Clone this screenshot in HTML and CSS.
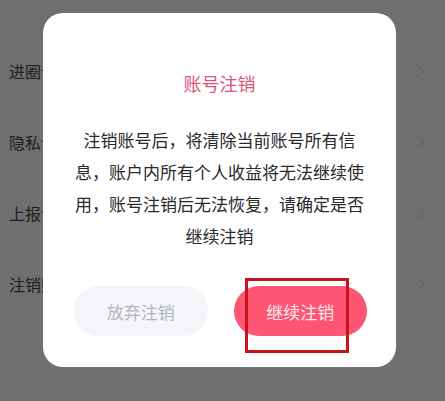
FILE: index.html
```html
<!DOCTYPE html>
<html lang="zh-CN">
<head>
<meta charset="utf-8">
<title>账号注销</title>
<link rel="stylesheet" href="styles.css">
</head>
<body>
<div class="page">
  <ul class="list">
    <li class="row"><span class="label">进圈设置</span><svg class="chev" viewBox="0 0 10 16"><path d="M2 1.5 L8.5 8 L2 14.5"/></svg></li>
    <li class="row"><span class="label">隐私设置</span><svg class="chev" viewBox="0 0 10 16"><path d="M2 1.5 L8.5 8 L2 14.5"/></svg></li>
    <li class="row"><span class="label">上报设置</span><svg class="chev" viewBox="0 0 10 16"><path d="M2 1.5 L8.5 8 L2 14.5"/></svg></li>
    <li class="row"><span class="label">注销账号</span><svg class="chev" viewBox="0 0 10 16"><path d="M2 1.5 L8.5 8 L2 14.5"/></svg></li>
  </ul>
</div>
<div class="mask"></div>
<div class="dialog">
  <div class="title">账号注销</div>
  <p class="msg">注销账号后，将清除当前账号所有信息，账户内所有个人收益将无法继续使用，账号注销后无法恢复，请确定是否继续注销</p>
  <div class="actions">
    <button class="btn cancel">放弃注销</button>
    <button class="btn confirm">继续注销</button>
  </div>
</div>
<div class="mark"></div>
</body>
</html>
```
FILE: styles.css
```css
html, body {
  margin: 0;
  padding: 0;
  width: 445px;
  height: 401px;
  overflow: hidden;
  font-family: "Noto Sans CJK SC", "Noto Sans", sans-serif;
}
.page {
  background: #ffffff;
  height: 401px;
}
.list {
  list-style: none;
  margin: 0;
  padding: 35px 0 0 0;
}
.row {
  height: 71px;
  display: flex;
  align-items: center;
  justify-content: space-between;
  padding: 0 20px 0 9px;
}
.label {
  font-size: 16px;
  color: #4a4a4a;
}
.chev {
  width: 10px;
  height: 16px;
  fill: none;
  stroke: #ececec;
  stroke-width: 1.6;
}
.mask {
  position: fixed;
  inset: 0;
  background: rgba(0, 0, 0, 0.565);
}
.dialog {
  position: fixed;
  left: 43px;
  top: 13px;
  width: 353px;
  height: 354px;
  box-sizing: border-box;
  background: #ffffff;
  border-radius: 20px;
  padding-top: 58px;
  display: flex;
  flex-direction: column;
  align-items: center;
}
.title {
  font-size: 18px;
  line-height: 24px;
  color: #d9577a;
}
.msg {
  margin: 29px 0 0 0;
  padding: 0 29px;
  box-sizing: border-box;
  width: 100%;
  font-size: 17px;
  line-height: 32px;
  color: #2a2a2a;
  text-align: center;
}
.actions {
  margin-top: 34px;
  width: 100%;
  box-sizing: border-box;
  padding: 0 29px 0 31px;
  display: flex;
  gap: 26px;
}
.btn {
  flex: 1;
  height: 50px;
  border: 0;
  border-radius: 25px;
  font-family: inherit;
  font-size: 17px;
  padding: 0;
}
.cancel {
  background: #f4f5f9;
  color: #b4b6bf;
}
.confirm {
  background: #fd5572;
  color: #ffeaee;
}
.mark {
  position: fixed;
  left: 245px;
  top: 278px;
  width: 104px;
  height: 75px;
  box-sizing: border-box;
  border: 3px solid #c9121c;
}
```
